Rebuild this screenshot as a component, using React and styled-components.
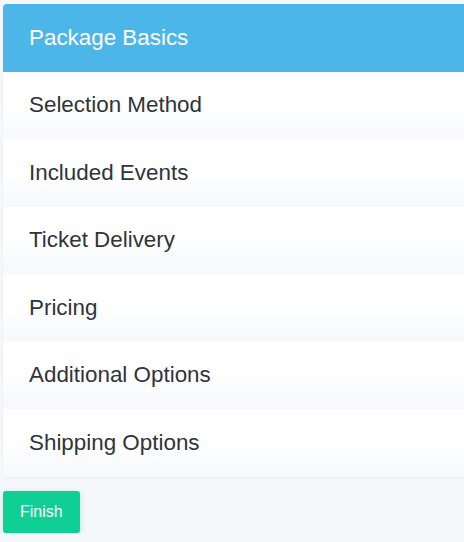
import styled, { createGlobalStyle } from "styled-components";

const GlobalStyle = createGlobalStyle`
  html, body {
    margin: 0;
    padding: 0;
    background: #f5f7fa;
    font-family: "Liberation Sans", Arial, sans-serif;
  }
`;

const steps = [
  "Package Basics",
  "Selection Method",
  "Included Events",
  "Ticket Delivery",
  "Pricing",
  "Additional Options",
  "Shipping Options",
];

const Page = styled.div`
  padding: 4px 0 0 3px;
`;

const Card = styled.div`
  display: flex;
  flex-direction: column;
  background: #fff;
  border-radius: 4px 0 0 4px;
  overflow: hidden;
  box-shadow: 0 1px 3px rgba(40, 60, 90, 0.05);
`;

const Step = styled.div`
  display: flex;
  align-items: center;
  height: 67.5px;
  box-sizing: border-box;
  padding-left: 26px;
  font-size: 22.4px;
  color: ${(p) => (p.$active ? "#ffffff" : "#2f343b")};
  background: ${(p) =>
    p.$active
      ? "#4db6e8"
      : "linear-gradient(to bottom, #ffffff 0%, #ffffff 45%, #f6f8fa 100%)"};
`;

const Finish = styled.button`
  margin-top: 14px;
  height: 42px;
  padding: 0 17px;
  border: none;
  border-radius: 3px;
  background: #10cf95;
  color: #fff;
  font-family: "Liberation Sans", Arial, sans-serif;
  font-size: 16px;
  box-shadow: 0 2px 6px rgba(16, 207, 149, 0.3);
  cursor: pointer;
`;

export default function App() {
  return (
    <>
      <GlobalStyle />
      <Page>
        <Card>
          {steps.map((s, i) => (
            <Step key={s} $active={i === 0}>
              {s}
            </Step>
          ))}
        </Card>
        <Finish>Finish</Finish>
      </Page>
    </>
  );
}
